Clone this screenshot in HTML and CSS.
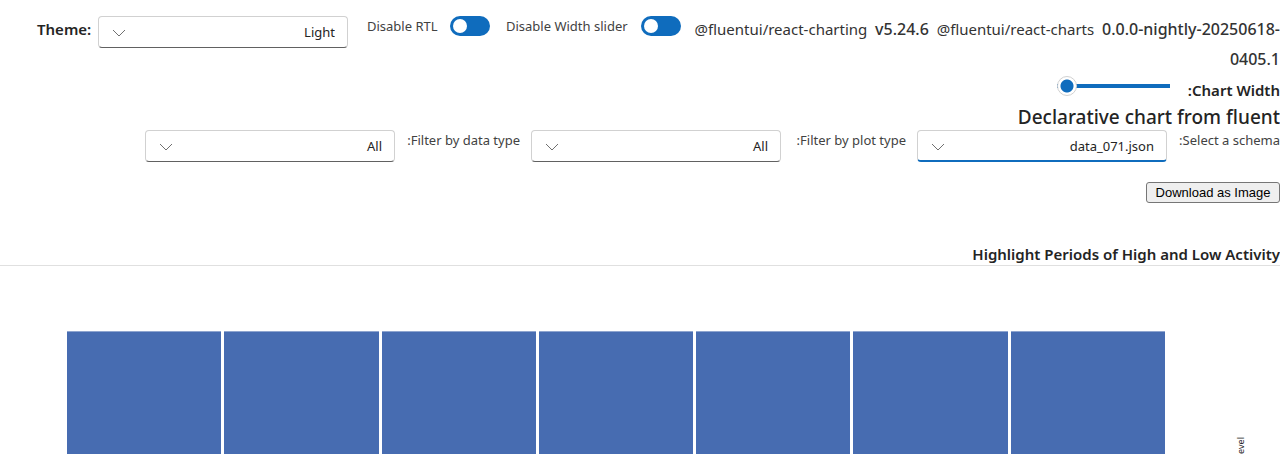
FILE: index.html
```html
<!DOCTYPE html>
<html lang="en">
<head>
<meta charset="utf-8">
<title>Declarative chart</title>
<link rel="stylesheet" href="styles.css">
</head>
<body>
<header class="toolbar">
  <label class="theme-label" for="theme">Theme:</label>
  <div class="dropdown" dir="rtl">
    <select id="theme" class="dropdown-field"><option>Light</option></select>
    <svg class="chevron" viewBox="0 0 14 8" aria-hidden="true"><path d="M1 1l6 6 6-6"/></svg>
  </div>
  <label class="switch-label rtl-label" for="rtl">Disable RTL</label>
  <input class="switch" type="checkbox" role="switch" id="rtl" checked>
  <label class="switch-label slider-label" for="width-slider">Disable Width slider</label>
  <input class="switch" type="checkbox" role="switch" id="width-slider" checked>
  <p class="versions">@fluentui/react-charting&nbsp; <b>v5.24.6</b>&nbsp; @fluentui/react-charts&nbsp; <b>0.0.0-nightly-20250618-0405.1</b></p>
</header>
<main class="page" dir="rtl">
  <div class="width-row">
    <label class="width-label" for="width">Chart Width:</label>
    <input class="slider" type="range" id="width" min="0" max="100" value="100">
  </div>
  <h1 class="heading">Declarative chart from fluent</h1>
  <div class="filters">
    <label class="filter-label schema-label" for="schema">Select a schema:</label>
    <div class="dropdown">
      <select id="schema" class="dropdown-field active"><option>data_071.json</option></select>
      <svg class="chevron" viewBox="0 0 14 8" aria-hidden="true"><path d="M1 1l6 6 6-6"/></svg>
    </div>
    <label class="filter-label" for="plot">Filter by plot type:</label>
    <div class="dropdown">
      <select id="plot" class="dropdown-field"><option>All</option></select>
      <svg class="chevron" viewBox="0 0 14 8" aria-hidden="true"><path d="M1 1l6 6 6-6"/></svg>
    </div>
    <label class="filter-label" for="data">Filter by data type:</label>
    <div class="dropdown">
      <select id="data" class="dropdown-field"><option>All</option></select>
      <svg class="chevron" viewBox="0 0 14 8" aria-hidden="true"><path d="M1 1l6 6 6-6"/></svg>
    </div>
  </div>
  <button class="download" type="button">Download as Image</button>
  <h2 class="chart-title">Highlight Periods of High and Low Activity</h2>
  <section class="chart">
    <div class="axis-title">Activity Level</div>
    <div class="cells">
      <div class="cell"></div><div class="cell"></div><div class="cell"></div><div class="cell"></div><div class="cell"></div><div class="cell"></div><div class="cell"></div>
    </div>
  </section>
</main>
</body>
</html>
```
FILE: styles.css
```css
* { box-sizing: border-box; }
body {
  margin: 0;
  height: 100vh;
  overflow: hidden;
  display: flex;
  flex-direction: column;
  background: #fff;
  color: #242424;
  font-family: "Segoe UI", "Noto Sans", "Open Sans", sans-serif;
  font-size: 13px;
}
.toolbar {
  display: flex;
  align-items: flex-start;
  padding: 14px 0 0 37px;
  font-size: 15px;
  line-height: 30px;
}
.theme-label { flex: none; width: 61px; font-weight: 600; }
.dropdown { position: relative; flex: none; width: 250px; }
.toolbar .dropdown { margin-top: 2px; }
.dropdown-field {
  display: block;
  width: 100%;
  height: 32px;
  padding: 0 12px;
  appearance: none;
  border: 1px solid #d1d1d1;
  border-bottom-color: #616161;
  border-radius: 4px;
  background: #fff;
  color: #242424;
  font: inherit;
  font-size: 13px;
}
.dropdown-field.active { border-bottom: 2px solid #0f6cbd; }
.chevron {
  position: absolute;
  left: 14px;
  top: 13px;
  width: 14px;
  height: 8px;
  fill: none;
  stroke: #707070;
  pointer-events: none;
}
.switch-label { flex: none; margin-top: 1px; color: #424242; font-size: 13px; line-height: 22px; white-space: nowrap; }
.rtl-label { width: 83px; margin-left: 19px; }
.slider-label { width: 135px; margin-left: 16px; }
.switch {
  flex: none;
  appearance: none;
  width: 40px;
  height: 20px;
  margin: 2px 0 0;
  padding: 3px;
  border-radius: 10px;
  background: #0f6cbd;
}
.switch::before {
  content: "";
  display: block;
  width: 14px;
  height: 14px;
  border-radius: 50%;
  background: #fff;
}
.versions { flex: 1; min-width: 0; margin: 0; text-align: right; color: #333; }
.versions b { font-size: 16px; font-weight: 500; line-height: 20px; }
.chart-title, .width-label { font-weight: 600; }
.page { flex: 1; min-height: 0; display: flex; flex-direction: column; padding-top: 1px; }
.width-row { display: flex; gap: 18px; line-height: 30px; font-size: 15px; }
.width-label { flex: none; width: 92px; white-space: nowrap; }
.slider {
  appearance: none;
  width: 113px;
  height: 20px;
  margin: 1px 0 0;
  background: linear-gradient(#0f6cbd, #0f6cbd) center / 100% 4px no-repeat;
  border-radius: 2px;
}
.slider::-webkit-slider-thumb {
  appearance: none;
  width: 20px;
  height: 20px;
  border: 1px solid #d1d1d1;
  border-radius: 50%;
  background: radial-gradient(circle, #0f6cbd 6px, #fff 7px);
}
.heading { margin: 0; font-size: 19px; font-weight: 500; line-height: 25px; }
.filters { display: flex; gap: 11px; }
.filter-label { flex: none; width: 114px; line-height: 20px; color: #424242; white-space: nowrap; }
.schema-label { width: 102px; }
.download {
  align-self: flex-start;
  width: 134px;
  height: 21px;
  margin-top: 20px;
  padding: 0;
  border: 1px solid #767676;
  border-radius: 3px;
  background: #efefef;
  color: #000;
  font: 13px "Liberation Sans", Arial, sans-serif;
}
.chart-title {
  margin: 40px 0 0;
  border-bottom: 1px solid #e0e0e0;
  font-size: 15px;
  line-height: 22px;
}
.chart { flex: 1; min-height: 0; display: flex; gap: 71px; padding: 65px 34px 0 67px; overflow: hidden; }
.axis-title {
  flex: none;
  width: 10px;
  padding-bottom: 106px;
  writing-mode: vertical-rl;
  transform: rotate(180deg);
  align-self: flex-start;
  font-size: 9px;
  line-height: 10px;
  white-space: nowrap;
}
.cells { flex: 1; display: grid; grid-template-columns: repeat(7, 1fr); gap: 3px; }
.cell { background: #476cb1; border-top: 1px solid #8fa5cf; }
```
